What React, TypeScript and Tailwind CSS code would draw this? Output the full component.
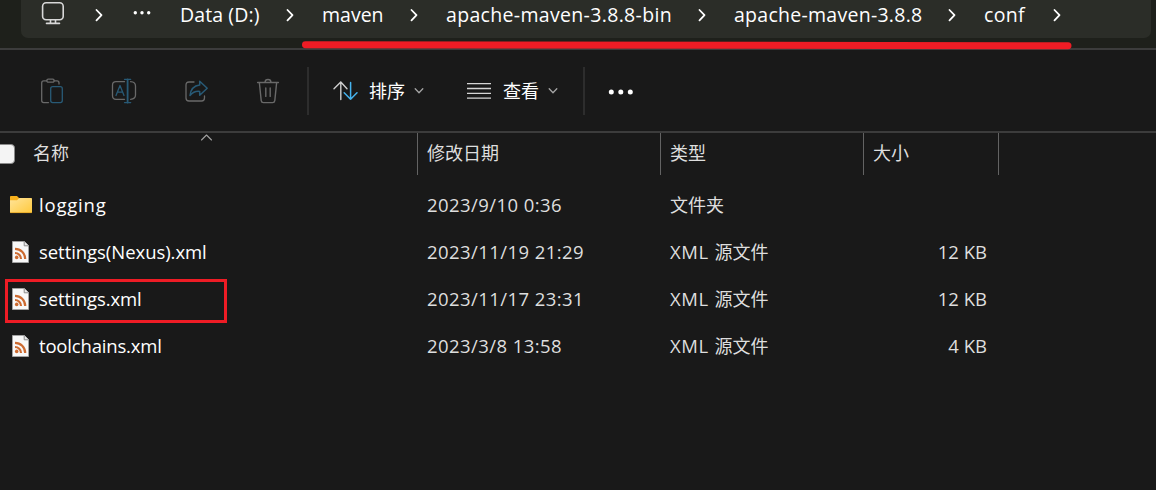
import React from 'react';

const stroke = { fill: 'none', strokeLinecap: 'round', strokeLinejoin: 'round' } as const;

function Chevron({ className }: { className: string }) {
  return (
    <span className={`flex shrink-0 justify-center ${className}`}>
      <svg width="8" height="14" viewBox="0 0 8 14" {...stroke} stroke="#fff" strokeWidth="1.8">
        <path d="M1.5 2L6.5 7.2L1.5 12.4" />
      </svg>
    </span>
  );
}

function Crumb({ className, children }: { className: string; children: React.ReactNode }) {
  return <span className={`shrink-0 whitespace-nowrap pl-px text-[19.5px] leading-[30px] text-white ${className}`}>{children}</span>;
}

function AddressBar() {
  return (
    <div className="h-[48px] bg-[#1e201b] pl-[21px] pr-[5px]">
      <div className="flex h-[38px] items-start rounded-b-[7px] bg-[#2b2d28] pl-[20px]">
        <svg className="shrink-0" width="24" height="26" viewBox="0 0 24 26" {...stroke} stroke="#d8d8d8" strokeWidth="1.6">
          <rect x="1.6" y="2.8" width="20.6" height="17" rx="3.5" />
          <path d="M9.5 20v3M14.5 20v3M5.5 23.4h13" />
        </svg>
        <Chevron className="w-[67px] pt-[8px]" />
        <svg className="shrink-0" width="19" height="26" viewBox="0 0 19 26" fill="#fff">
          <circle cx="3.3" cy="12.7" r="1.7" />
          <circle cx="10" cy="12.7" r="1.7" />
          <circle cx="16.7" cy="12.7" r="1.7" />
        </svg>
        <Crumb className="ml-[28px] w-[79px] tracking-[0.1px]">Data (D:)</Crumb>
        <Chevron className="w-[63px] pt-[8px]" />
        <Crumb className="w-[62px]">maven</Crumb>
        <Chevron className="w-[61px] pt-[8px]" />
        <Crumb className="ml-[1px] w-[226px] tracking-[0.33px]">apache-maven-3.8.8-bin</Crumb>
        <Chevron className="w-[61px] pt-[8px]" />
        <Crumb className="ml-[1px] w-[188px] tracking-[0.27px]">apache-maven-3.8.8</Crumb>
        <Chevron className="w-[61px] pt-[8px]" />
        <Crumb className="ml-[1px] w-[42px] tracking-[0.3px]">conf</Crumb>
        <Chevron className="w-[64px] pt-[8px]" />
      </div>
    </div>
  );
}

function SmallChevron() {
  return (
    <svg className="shrink-0" width="10" height="8" viewBox="0 0 10 8" {...stroke} stroke="#a5a5a5" strokeWidth="1.3">
      <path d="M1.2 1.8L5 5.7L8.8 1.8" />
    </svg>
  );
}

function Toolbar() {
  return (
    <div className="flex h-[85px] items-center border-y-2 border-[#3c3c3c] pl-[40px]">
      <svg className="shrink-0" width="24" height="26" viewBox="0 0 24 26" {...stroke} stroke="#696969" strokeWidth="1.3">
        <path d="M6.8 2.9H3.7Q1.7 2.9 1.7 4.9V22.6Q1.7 24.6 3.7 24.6H8.5M14 2.9H17Q19 2.9 19 4.9V6" />
        <rect x="6.8" y="1.2" width="7.4" height="3" rx="1.5" />
        <rect x="10.7" y="8.7" width="11.6" height="15.9" rx="2" stroke="#285a76" />
      </svg>
      <svg className="ml-[47px] shrink-0" width="26" height="26" viewBox="0 0 26 26" {...stroke} stroke="#696969" strokeWidth="1.3">
        <path d="M13.5 3.7H5Q1.5 3.7 1.5 7.2V17.8Q1.5 21.3 5 21.3H13.5M19.6 3.7Q24.5 4 24.5 8V17Q24.5 21 19.6 21.3" />
        <g stroke="#285a76">
          <path d="M5 17.5L9 7.5L13 17.5M6.4 14.2H11.6" />
          <path d="M13.5 1.3H19.7M13.5 24.6H19.7" />
          <path d="M16.6 1.5V24.5" strokeWidth="1.8" />
        </g>
      </svg>
      <svg className="ml-[47px] shrink-0" width="26" height="26" viewBox="0 0 26 26" {...stroke} stroke="#696969" strokeWidth="1.3">
        <path d="M10 4H5Q2 4 2 7V20Q2 23 5 23H17.5Q20.5 23 20.5 20V18" />
        <path d="M15.7 3.2V7Q7 8 6 17.5Q10 12.7 15.7 13.4V17.3L23.2 10.2Z" stroke="#285a76" strokeWidth="1.5" />
      </svg>
      <svg className="ml-[46px] shrink-0" width="24" height="26" viewBox="0 0 24 26" {...stroke} stroke="#696969" strokeWidth="1.4">
        <path d="M1.6 4.5H22.4M9 4.2Q9.2 1.5 12 1.5Q14.8 1.5 15 4.2M3.4 5L5.2 22.6Q5.5 24.6 7.3 24.6H16.7Q18.5 24.6 18.8 22.6L20.6 5M9.8 10V18.4M14.2 10V18.4" />
      </svg>
      <span className="ml-[27px] h-[48px] w-[2px] shrink-0 bg-[#2d2d2d]" />
      <svg className="ml-[23px] shrink-0" width="26" height="22" viewBox="0 0 26 22" {...stroke} strokeWidth="1.4">
        <path d="M8.8 19.5V2M2 8.7L8.8 2L15 8.7" stroke="#cfcfcf" />
        <path d="M18.6 2.4V19.3M12.2 12.8L18.6 19.3L25 12.8" stroke="#45b3ee" strokeWidth="1.5" />
      </svg>
      <span className="ml-[10px] w-[37px] shrink-0 whitespace-nowrap pl-px text-[18px] leading-6 text-white">排序</span>
      <span className="ml-[9px] flex shrink-0"><SmallChevron /></span>
      <svg className="ml-[43px] shrink-0" width="24" height="18" viewBox="0 0 24 18" stroke="#d5d5d5" strokeWidth="1.3">
        <path d="M0 1.7H24M0 6.5H24M0 11.3H24M0 16.1H24" />
      </svg>
      <span className="ml-[11px] w-[37px] shrink-0 whitespace-nowrap pl-px text-[18px] leading-6 text-white">查看</span>
      <span className="ml-[9px] flex shrink-0"><SmallChevron /></span>
      <span className="ml-[25px] h-[48px] w-[2px] shrink-0 bg-[#2d2d2d]" />
      <svg className="ml-[23px] mt-[2px] shrink-0" width="26" height="8" viewBox="0 0 26 8" fill="#fff">
        <circle cx="3.3" cy="4" r="2.5" />
        <circle cx="12.8" cy="4" r="2.5" />
        <circle cx="22.3" cy="4" r="2.5" />
      </svg>
    </div>
  );
}

const headerText = 'h-full border-l border-[#636363] text-[18px] leading-[40px] text-[#dedede]';

function TableHeader() {
  return (
    <div className="flex h-[42px]">
      <div className="relative flex w-[417px] items-start">
        <span className="-ml-[4px] mt-[11px] h-[20px] w-[19px] shrink-0 rounded-[4px] border border-[#8a8a8a] bg-[#f4f4f4]" />
        <span className="ml-[18px] text-[18px] leading-[40px] text-[#dedede]">名称</span>
        <svg className="absolute left-[200px] top-0" width="13" height="9" viewBox="0 0 13 9" {...stroke} stroke="#a0a0a0" strokeWidth="1.1">
          <path d="M1.5 7L6.5 2L11.5 7" />
        </svg>
      </div>
      <div className={`w-[243px] pl-[9px] ${headerText}`}>修改日期</div>
      <div className={`w-[203px] pl-[9px] ${headerText}`}>类型</div>
      <div className={`w-[135px] pl-[9px] ${headerText}`}>大小</div>
      <div className="h-full border-l border-[#636363]" />
    </div>
  );
}

function FolderIcon() {
  return (
    <svg className="shrink-0" width="24" height="24" viewBox="0 0 24 24">
      <defs>
        <linearGradient id="folder" x1="0" y1="0" x2="1" y2="1">
          <stop offset="0" stopColor="#ffe49a" />
          <stop offset="1" stopColor="#ffc93c" />
        </linearGradient>
      </defs>
      <path d="M1 3.8Q1 3 1.8 3H8L10 5V8H1Z" fill="#f8b11c" />
      <path d="M1 7.3H8L10.3 5H22.2Q23 5 23 5.8V19.2Q23 20 22.2 20H1.8Q1 20 1 19.2Z" fill="url(#folder)" />
      <path d="M1.3 19.6H22.7" stroke="#e2a322" strokeWidth=".8" />
    </svg>
  );
}

function XmlIcon() {
  return (
    <svg className="shrink-0" width="24" height="24" viewBox="0 0 24 24">
      <path d="M3.5 1.5H15.5L19.5 5.5V22.5H3.5Z" fill="#f8f8f8" stroke="#a2a2a2" />
      <path d="M15.2 1.5V5.8H19.5" fill="#e8e8e8" stroke="#8c8c8c" />
      <g fill="none" stroke="#cd6b31" strokeWidth="2.2">
        <path d="M6 13A6 6 0 0 1 12 19" />
        <path d="M6 8.8A10.2 10.2 0 0 1 16.2 19" />
      </g>
      <circle cx="7.7" cy="17.4" r="1.8" fill="#cd6b31" />
    </svg>
  );
}

type Entry = { name: string; nameClass: string; date: string; size?: string };

const entries: Entry[] = [
  { name: 'logging', nameClass: 'tracking-[0.8px]', date: '2023/9/10 0:36' },
  { name: 'settings(Nexus).xml', nameClass: 'tracking-[-0.05px]', date: '2023/11/19 21:29', size: '12 KB' },
  { name: 'settings.xml', nameClass: 'tracking-[-0.08px]', date: '2023/11/17 23:31', size: '12 KB' },
  { name: 'toolchains.xml', nameClass: 'tracking-[-0.18px]', date: '2023/3/8 13:58', size: '4 KB' },
];

function Row({ entry }: { entry: Entry }) {
  return (
    <div className="flex h-[47px] items-center whitespace-nowrap text-[18.5px] leading-6 text-[#dedede]">
      <div className="flex w-[427px] items-center pl-[9px]">
        {entry.size ? <XmlIcon /> : <FolderIcon />}
        <span className={`ml-[6px] text-white ${entry.nameClass}`}>{entry.name}</span>
      </div>
      <div className="w-[243px] tracking-[0.43px]">{entry.date}</div>
      <div className="flex w-[193px] items-baseline text-[18px]">
        {entry.size ? (
          <>
            <span className="w-[44.5px] whitespace-pre text-[18.5px] tracking-[0.6px]">XML </span>
            <span>源文件</span>
          </>
        ) : (
          <span>文件夹</span>
        )}
      </div>
      <div className="w-[124px] text-right">{entry.size}</div>
    </div>
  );
}

export default function App() {
  return (
    <div className="relative h-[490px] w-[1156px] overflow-hidden bg-[#191919] font-['Open_Sans','Noto_Sans_CJK_SC',sans-serif]">
      <AddressBar />
      <Toolbar />
      <TableHeader />
      <div className="pt-[6px]">
        {entries.map((entry) => (
          <Row key={entry.name} entry={entry} />
        ))}
      </div>
      <svg className="absolute left-[300px] top-[38px]" width="774" height="14" viewBox="0 0 774 14">
        <path d="M5.5 6.7L768 7.7" stroke="#ee1c25" strokeWidth="7" strokeLinecap="round" />
      </svg>
      <div className="absolute left-[5px] top-[279px] h-[44px] w-[222px] border-[3px] border-[#ee1c25]" />
    </div>
  );
}
